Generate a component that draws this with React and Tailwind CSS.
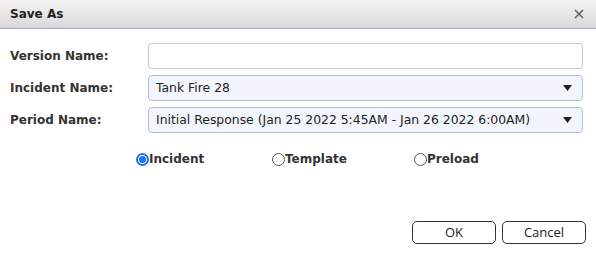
import React from 'react'

const verdana = { fontFamily: '"DejaVu Sans", Verdana, sans-serif' }

function Caret() {
  return (
    <svg width="9" height="6" viewBox="0 0 9 6" className="shrink-0">
      <path d="M0 0 H9 L4.5 6 Z" fill="#222" />
    </svg>
  )
}

function Row({ label, children }) {
  return (
    <div className="flex items-center h-[26px]">
      <div className="w-[138px] text-[12px] font-bold text-[#333]">{label}</div>
      {children}
    </div>
  )
}

function Select({ value }) {
  return (
    <div className="flex-1 h-[26px] flex items-center justify-between pl-[7px] pr-[10px] rounded-[4px] border border-[#a9c0e0] bg-[#f2f6fc] text-[12.4px] text-[#222]">
      <span>{value}</span>
      <Caret />
    </div>
  )
}

function Radio({ label, checked, width }) {
  return (
    <label className={`flex items-center ${width}`}>
      {checked ? (
        <span className="w-[13px] h-[13px] rounded-full border-[2px] border-[#1a73e8] flex items-center justify-center">
          <span className="w-[7px] h-[7px] rounded-full bg-[#1a73e8]" />
        </span>
      ) : (
        <span className="w-[13px] h-[13px] rounded-full border border-[#555] bg-white" />
      )}
      <span className="text-[12px] font-bold text-[#333]">{label}</span>
    </label>
  )
}

export default function App() {
  return (
    <div className="w-[596px] h-[254px] bg-white flex flex-col" style={verdana}>
      <div className="h-[29px] flex items-center justify-between pl-[10px] pr-[12px] bg-gradient-to-b from-[#f3f3f3] to-[#d9d9d9] border-b border-[#9aaac4]">
        <span className="text-[12px] font-bold text-[#222]">Save As</span>
        <svg width="10" height="10" viewBox="0 0 10 10">
          <path d="M1 1 L9 9 M9 1 L1 9" stroke="#666" strokeWidth="1.7" />
        </svg>
      </div>

      <div className="flex-1 flex flex-col pt-[14px] pl-[10px] pr-[13px]">
        <div className="flex flex-col gap-[6px]">
          <Row label="Version Name:">
            <div className="flex-1 h-[26px] rounded-[4px] border border-[#c8c8c8] bg-white" />
          </Row>
          <Row label="Incident Name:">
            <Select value="Tank Fire 28" />
          </Row>
          <Row label="Period Name:">
            <Select value="Initial Response (Jan 25 2022 5:45AM - Jan 26 2022 6:00AM)" />
          </Row>
        </div>

        <div className="flex items-center mt-[19px] pl-[126px] h-[14px]">
          <Radio label="Incident" checked width="w-[136px]" />
          <Radio label="Template" width="w-[142px]" />
          <Radio label="Preload" width="" />
        </div>

        <div className="flex justify-end gap-[6px] mt-auto mb-[10px] -mr-[3px]" style={{ fontFamily: '"Open Sans", "Noto Sans", sans-serif' }}>
          <button className="w-[84px] h-[23px] rounded-[5px] border border-[#333] bg-white text-[13px] text-[#222]">OK</button>
          <button className="w-[84px] h-[23px] rounded-[5px] border border-[#333] bg-white text-[13px] text-[#222]">Cancel</button>
        </div>
      </div>
    </div>
  )
}
